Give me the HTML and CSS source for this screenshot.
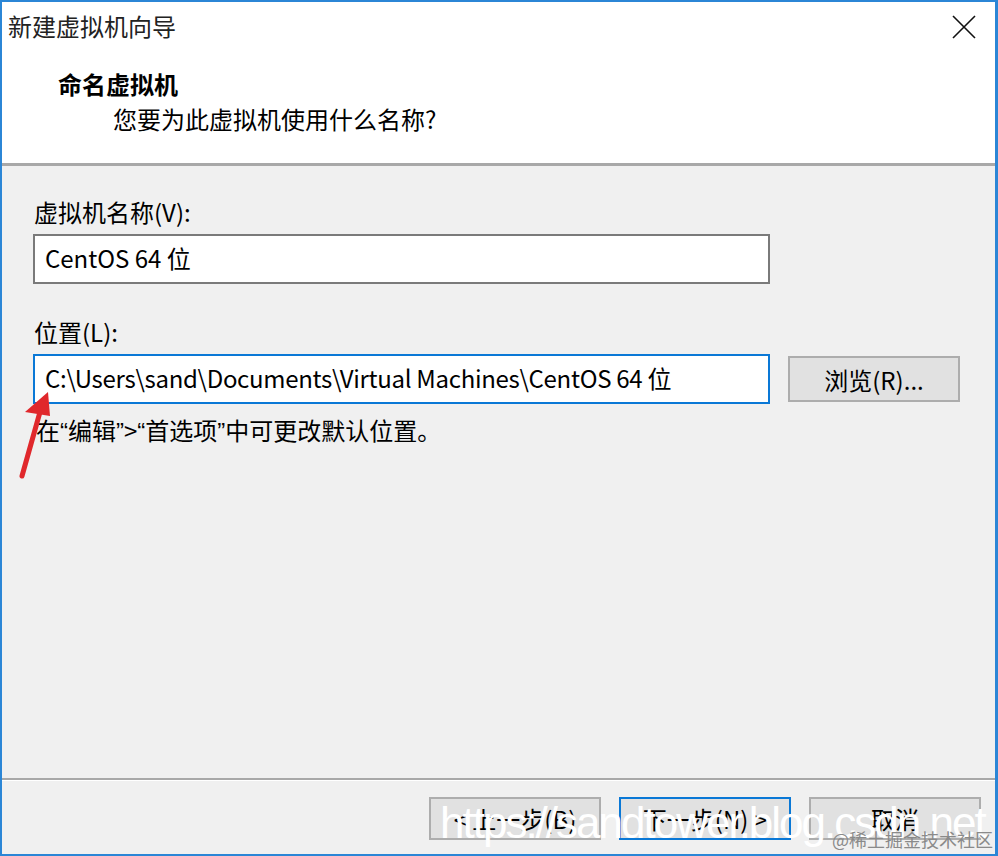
FILE: index.html
```html
<!DOCTYPE html>
<html lang="zh-CN">
<head>
    <meta charset="UTF-8">
    <meta name="viewport" content="width=device-width, initial-scale=1.0">
    <title>新建虚拟机向导</title>
    <link rel="stylesheet" href="styles.css">
</head>
<body>
    <div class="window">
        <div class="header">
            <div class="titlebar">
                <span class="title">新建虚拟机向导</span>
                <svg class="close" width="24" height="24" viewBox="0 0 24 24">
                    <path d="M1 1L23 23M23 1L1 23" stroke="#111" stroke-width="1.6" fill="none"/>
                </svg>
            </div>
            <div class="heading">命名虚拟机</div>
            <div class="subheading">您要为此虚拟机使用什么名称?</div>
        </div>

        <div class="content">
            <label class="field-label" for="vmName">虚拟机名称(V):</label>
            <div class="textbox" id="vmName">CentOS 64 位</div>

            <label class="field-label" for="vmPath">位置(L):</label>
            <div class="path-row">
                <div class="textbox focused" id="vmPath">C:\Users\sand\Documents\Virtual Machines\CentOS 64 位</div>
                <button class="btn browse">浏览(R)...</button>
            </div>
            <div class="hint">在<span class="q">“</span>编辑<span class="q">”</span>&gt;<span class="q">“</span>首选项<span class="q">”</span>中可更改默认位置。</div>

            <svg class="arrow" width="44" height="92" viewBox="0 0 44 92">
                <line x1="6" y1="86" x2="24" y2="22" stroke="#e0282c" stroke-width="5" stroke-linecap="round"/>
                <polygon points="32,2 9,22 34,26" fill="#e0282c"/>
            </svg>
        </div>

        <div class="footer">
            <button class="btn">&lt; 上一步(B)</button>
            <button class="btn default">下一步(N) &gt;</button>
            <button class="btn">取消</button>
        </div>

        <div class="watermark">https://sandtower.blog.csdn.net</div>
        <div class="source">@稀土掘金技术社区</div>
    </div>
</body>
</html>
```

FILE: styles.css
```css
body {
    margin: 0;
    font-family: "Noto Sans CJK SC", sans-serif;
    font-size: 24px;
    color: #000;
}

.window {
    position: relative;
    width: 998px;
    height: 856px;
    box-sizing: border-box;
    border: 2px solid #2b86d6;
    border-right-width: 3px;
    background-color: #f0f0f0;
    display: flex;
    flex-direction: column;
    overflow: hidden;
}

.header {
    background-color: #fff;
    height: 161px;
    border-bottom: 3px solid #a8a8a8;
}

.titlebar {
    display: flex;
    justify-content: space-between;
    align-items: center;
    padding: 9px 19px 0 6px;
    height: 30px;
    line-height: 30px;
}

.title {
    color: #222;
}

.close {
    margin-top: 2px;
}

.heading {
    font-weight: bold;
    margin: 27px 0 0 56px;
    line-height: 32px;
}

.subheading {
    margin: 3px 0 0 111px;
    line-height: 32px;
}

.content {
    position: relative;
    flex: 1;
    padding: 30px 0 0 31px;
}

.field-label {
    display: block;
    line-height: 32px;
    margin-left: 1px;
    margin-bottom: 6px;
}

.textbox {
    box-sizing: border-box;
    width: 737px;
    height: 50px;
    background-color: #fff;
    border: 2px solid #7a7a7a;
    padding-left: 10px;
    line-height: 44px;
    margin-bottom: 32px;
    white-space: nowrap;
}

.textbox.focused {
    border-color: #0a78d6;
    margin-bottom: 0;
    letter-spacing: -0.3px;
}

.path-row {
    display: flex;
    align-items: center;
    gap: 18px;
}

.btn {
    box-sizing: border-box;
    width: 172px;
    height: 43px;
    background-color: #e1e1e1;
    border: 2px solid #adadad;
    font-family: inherit;
    font-size: 24px;
    color: #000;
    padding: 0;
}

.browse {
    height: 46px;
}

.btn.default {
    border-color: #0a78d6;
}

.hint {
    margin: 10px 0 0 3px;
    line-height: 32px;
}

.q {
    font-family: "Liberation Sans", sans-serif;
}

.arrow {
    position: absolute;
    left: 14px;
    top: 224px;
}

.footer {
    height: 76px;
    border-top: 2px solid #a8a8a8;
    box-shadow: inset 0 1px 0 #fff;
    display: flex;
    justify-content: flex-end;
    align-items: flex-start;
    gap: 18px;
    padding: 17px 14px 0 0;
    box-sizing: border-box;
}

.watermark {
    position: absolute;
    left: 438px;
    top: 796px;
    font-family: "Liberation Sans", sans-serif;
    font-size: 44px;
    letter-spacing: -2px;
    color: #fff;
    white-space: nowrap;
}

.source {
    position: absolute;
    left: 830px;
    top: 824px;
    font-size: 18px;
    color: #8a8a8a;
    white-space: nowrap;
}
```
